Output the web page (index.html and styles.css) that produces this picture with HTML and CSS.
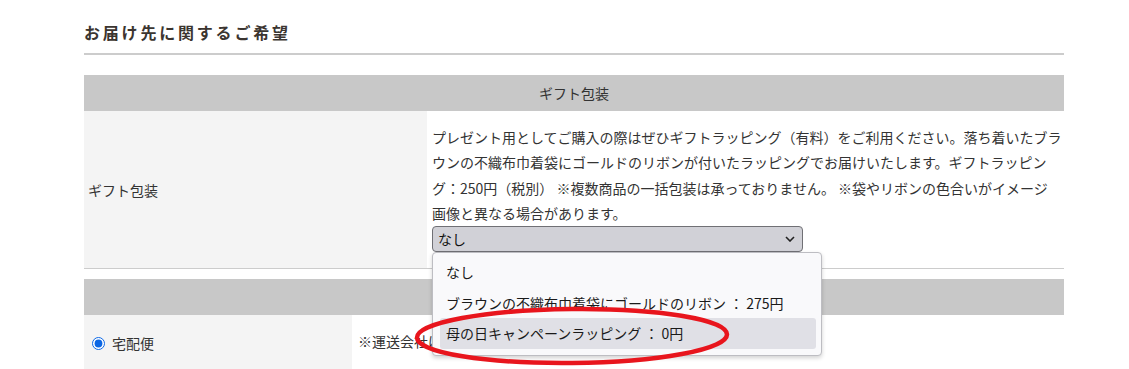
FILE: index.html
```html
<!DOCTYPE html>
<html>
    <head>
        <title>お届け先に関するご希望</title>
        <meta charset="utf-8">
        <link rel="stylesheet" href="styles.css">
    </head>
    <body>
        <div class="wrap">
            <h2 class="title">お届け先に関するご希望</h2>
            <table class="tbl gift">
                <tr><th colspan="2">ギフト包装</th></tr>
                <tr>
                    <td class="label">ギフト包装</td>
                    <td class="body">
                        <p class="note">プレゼント用としてご購入の際はぜひギフトラッピング（有料）をご利用ください。落ち着いたブラウンの不織布巾着袋にゴールドのリボンが付いたラッピングでお届けいたします。ギフトラッピング：250円（税別） ※複数商品の一括包装は承っておりません。 ※袋やリボンの色合いがイメージ<br>画像と異なる場合があります。</p>
                        <div class="select">
                            <span>なし</span>
                            <svg class="chev" width="10" height="6" viewBox="0 0 10 6"><path d="M1 1l4 4 4-4" fill="none" stroke="#222" stroke-width="1.6"/></svg>
                            <div class="menu">
                                <div class="opt">なし</div>
                                <div class="opt">ブラウンの不織布巾着袋にゴールドのリボン ： 275円</div>
                                <div class="opt on">母の日キャンペーンラッピング ： 0円</div>
                                <svg class="circle" width="324" height="64" viewBox="0 0 324 64"><ellipse cx="162" cy="32" rx="155" ry="27" fill="none" stroke="#e8151d" stroke-width="4.5" transform="rotate(-0.6 162 32)"/></svg>
                            </div>
                        </div>
                    </td>
                </tr>
            </table>
            <table class="tbl ship">
                <tr><th colspan="2"></th></tr>
                <tr>
                    <td class="label"><label class="radio"><input type="radio" name="ship" checked>宅配便</label></td>
                    <td class="body">※運送会社はお選びいただけません。</td>
                </tr>
            </table>
        </div>
    </body>
</html>
```

FILE: styles.css
```css
* {
    margin: 0;
    padding: 0;
}
body {
    font-family: "Noto Sans CJK JP", "Noto Sans", sans-serif;
    font-size: 14px;
    color: #333;
    background: #fff;
}
.wrap {
    width: 980px;
    margin-left: 84px;
    padding-top: 20px;
}
.title {
    font-size: 16px;
    line-height: 24px;
    font-weight: bold;
    letter-spacing: 2.8px;
    color: #3b3530;
    padding-bottom: 9px;
    border-bottom: 2px solid #ccc;
}
.tbl {
    width: 980px;
    border-collapse: collapse;
}
.tbl th {
    background-color: #c8c8c8;
    height: 36px;
    font-weight: normal;
    text-align: center;
    color: #333;
}
.tbl td {
    vertical-align: middle;
}
.label {
    background-color: #f4f4f4;
    padding-left: 4px;
}
.gift {
    margin-top: 20px;
}
.gift .label {
    width: 339px;
}
.gift td {
    border-bottom: 1px solid #ccc;
}
.gift .body {
    padding: 14px 0 16px 5px;
}
.note {
    line-height: 25.3px;
}
.select {
    position: relative;
    width: 359px;
    height: 24px;
    border: 1px solid #707075;
    border-radius: 4px;
    background-color: #d1d1d7;
    display: flex;
    align-items: center;
    justify-content: space-between;
    padding: 0 5px;
    color: #111;
}
.chev {
    margin-right: 2px;
}
.menu {
    position: absolute;
    left: -1px;
    top: 25px;
    width: 390px;
    padding: 4px 5px 6px 7px;
    background-color: #f9f9fb;
    border: 1px solid #bdbdc2;
    border-radius: 4px;
    box-shadow: 0 2px 4px rgba(0, 0, 0, 0.18);
    box-sizing: border-box;
    z-index: 2;
}
.opt {
    height: 30.5px;
    line-height: 30.5px;
    padding-left: 6px;
    border-radius: 3px;
    color: #1a1a1a;
    white-space: nowrap;
}
.opt.on {
    background-color: #e0e0e6;
}
.circle {
    position: absolute;
    left: -23px;
    top: 51px;
}
.ship {
    margin-top: 10px;
}
.ship .label {
    width: 263px;
    height: 56px;
    padding-left: 5px;
}
.ship .body {
    padding-left: 6px;
    vertical-align: top;
    padding-top: 16px;
}
.radio {
    display: flex;
    align-items: center;
}
.radio input {
    width: 13px;
    height: 13px;
    margin: 0 7px 0 3px;
    accent-color: #0b66e4;
}
```
